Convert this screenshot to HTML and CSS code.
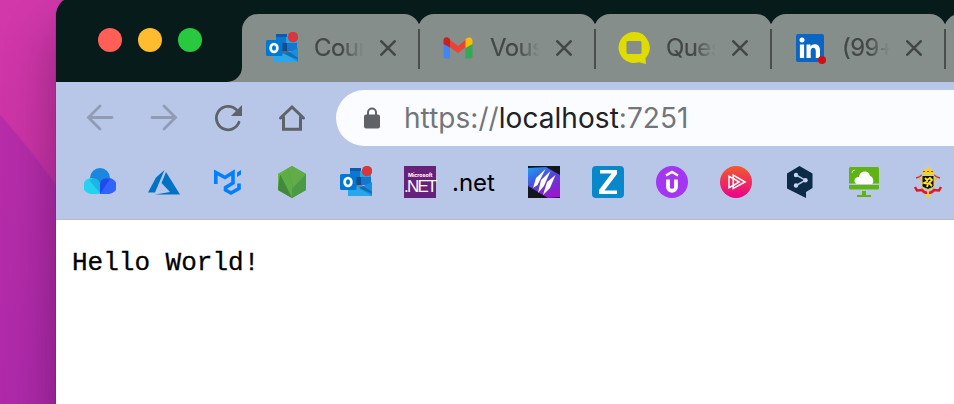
FILE: index.html
```html
<!DOCTYPE html>
<html lang="fr">
<head>
<meta charset="utf-8">
<title>localhost</title>
<link rel="stylesheet" href="styles.css">
</head>
<body>
<svg class="defs" width="0" height="0" aria-hidden="true">
  <symbol id="outlook" viewBox="0 0 32 32">
    <path fill="#0a5aad" d="M10 2h11v6H10z"/><path fill="#1275cd" d="M10 5h11v13H10z"/><path fill="#28a4e6" d="M20 5h11v13H20z"/><path fill="#124e8c" d="M15 11h6v8h-6z"/><path fill="#1377cf" d="M21 11h10v8H21z"/>
    <path fill="#28a8ea" d="M8 18v12h24V17l-11 6z"/><path fill="#1490df" d="M32 16v14L19 22z"/><path fill="#144f8a" d="M16 15l16 11v1.500L16 21z" opacity=".55"/>
    <rect y="8" width="16.500" height="16" rx="1.500" fill="#0078d4"/><ellipse cx="8" cy="16" rx="3.400" ry="4" fill="none" stroke="#fff" stroke-width="2.700"/>
    <circle cx="27" cy="5" r="5.200" fill="#d6373c"/>
  </symbol>
  <symbol id="close" viewBox="0 0 16 16"><path d="M1.300 1.300l13.400 13.400M14.700 1.300L1.300 14.700" fill="none" stroke="#444746" stroke-width="2.600" stroke-linecap="round"/></symbol>
</svg>
<div class="window">
  <header class="tabstrip">
    <div class="lights"><i class="red"></i><i class="yellow"></i><i class="green"></i></div>
    <div class="tabs">
      <div class="tab"><svg class="icon"><use href="#outlook"/></svg><span class="title">Cour</span><svg class="close"><use href="#close"/></svg></div>
      <div class="tab"><svg class="icon" viewBox="0 0 32 32"><path fill="#4285f4" d="M1.500 10L8 14v12.500H3.500q-2 0-2-2z"/><path fill="#34a853" d="M23.500 14l7-4v14.500q0 2-2 2h-5z"/><path fill="#ea4335" d="M7.500 7.500L16 14l8-6.500V15l-8 6-8.500-6z"/><path fill="#c5221f" d="M1.500 12V8.500C1.500 5 5 4 8 7v8.500z"/><path fill="#fbbc04" d="M23.500 7.500c3-3 7-2.500 7 2V12l-7 4z"/></svg><span class="title">Vous</span><svg class="close"><use href="#close"/></svg></div>
      <div class="tab"><svg class="icon" viewBox="0 0 32 32"><path fill="#dedc00" fill-rule="evenodd" d="M16 0a15.500 15.500 0 1 0 5 30.200l7 1.800-.5-6A15.500 15.500 0 0 0 16 0zM10 9h12q1.500 0 1.500 1.500v10q0 1.500-1.500 1.500H10q-1.500 0-1.500-1.500v-10Q8.500 9 10 9z"/></svg><span class="title">Ques</span><svg class="close"><use href="#close"/></svg></div>
      <div class="tab"><svg class="icon" viewBox="0 0 32 32"><rect x="2" y="2" width="28" height="28" rx="2" fill="#0a66c2"/><circle cx="8" cy="8" r="2.500" fill="#fff"/><path fill="#fff" d="M5.900 12.500h4.200V26H5.900zM12.500 12.500h4v2c2-3.500 9.500-3.500 9.500 3.500v8h-4.200v-7c0-4.500-5.100-4.500-5.100 0v7h-4.200z"/><circle cx="28" cy="28" r="4" fill="#cc1016"/></svg><span class="title">(99+)</span><svg class="close"><use href="#close"/></svg></div>
      <div class="tab"></div>
    </div>
  </header>
  <nav class="toolbar">
    <svg class="nav dim" viewBox="0 0 32 32"><path d="M28 15.500H4.500M16 4L4.500 15.500 16 27"/></svg>
    <svg class="nav dim" viewBox="0 0 32 32"><path d="M4 15.500H27.500M16 4l11.500 11.500L16 27"/></svg>
    <svg class="nav" viewBox="0 0 32 32"><path d="M27 20.300A11.700 11.700 0 1 1 24.500 7.900"/><path class="solid" d="M30 3v11H19z"/></svg>
    <svg class="nav" viewBox="0 0 32 32"><path class="roof" d="M4.500 16L16 5l11.500 11M7.500 15v12.200h17V15"/></svg>
    <div class="omnibox">
      <svg class="lock" viewBox="0 0 16 22"><path d="M4 9V5.500a4 4 0 0 1 8 0V9" fill="none" stroke="#5f6368" stroke-width="2"/><rect y="7.500" width="16" height="14" rx="2" fill="#5f6368"/></svg>
      <span class="url">https://<b>localhost</b>:7251</span>
    </div>
  </nav>
  <nav class="bookmarks">
    <svg viewBox="0 0 32 32"><circle cx="16" cy="12" r="10" fill="#1b86e0"/><path fill="#26d2ee" d="M16 28H8a8 8 0 1 1 2-15.500l6 5z"/><path fill="#3363ff" d="M16 28h8a8 8 0 1 0-2-15.500l-6 5z"/><path fill="#1cb6e6" d="M10 12.500q6 0 6 7V27L5 14z"/><path fill="#2149f0" d="M22 12.500q-6 0-6 7V28l10-15z"/></svg>
    <svg viewBox="0 0 32 32"><path fill="#0072c6" d="M16.500 4L8 11.500 0 26.500h7zM18 6l-4.500 11 8.500 9-15 2.500h25z"/></svg>
    <svg viewBox="0 0 32 32"><path d="M3.800 18V6.500l9.200 5 8-5V17l-7.500 4.500V24l5.500 3 8-4.500v-5" fill="none" stroke="#007fff" stroke-width="3.600"/><path fill="#007fff" d="M25 6.500L29 4v4.500L25 11z"/></svg>
    <svg viewBox="0 0 32 32"><path fill="#4c953f" d="M16 0l14 8v16l-14 8L2 24V8z"/><path fill="#66b848" d="M16 0L2 8v14L12 2.500z"/><path fill="#5cad46" d="M12 2.500L3 10l13 22 3-2z"/><path fill="#43893d" d="M4 8L2 22v2l14 8z"/><path fill="#62ac48" d="M16 0l-4 2.500L17 22 30 9V8z"/><path fill="#4e9944" d="M30 8L16 23v9l14-8z"/></svg>
    <svg><use href="#outlook"/></svg>
    <div class="dotnet"><div class="badge"><small>Microsoft</small><span>.NET</span></div><span class="label">.net</span></div>
    <svg viewBox="0 0 32 32"><defs><linearGradient id="a" x1="0" y1="0" x2=".6" y2="1"><stop stop-color="#17a5f5"/><stop offset=".5" stop-color="#4e48dc"/><stop offset="1" stop-color="#9817cf"/></linearGradient></defs><path fill="#15151d" d="M0 0h32v32H0z"/><path fill="url(#a)" d="M0 2l18-1 14 8v22l-12 1L0 20z"/><path fill="#fff" d="M17.500 3L8 12 5 22l4.500-3zM22.500 5L13 14l-3 13 6-7zM27.500 9L19 16l-4 13 7-7z"/></svg>
    <svg viewBox="0 0 32 32"><rect width="32" height="32" rx="4" fill="#0788ca"/><path fill="#fff" d="M8 4h17v4L12.500 24.500H25V28H7v-4L19.500 7.500H8z"/></svg>
    <svg viewBox="0 0 32 32"><circle cx="16" cy="16" r="16" fill="#a435f0"/><path d="M10 9.500L16 6l6 3.500" fill="none" stroke="#fff" stroke-width="2.600"/><path d="M12 13.500V21c0 5 8 5 8 0v-7.500" fill="none" stroke="#fff" stroke-width="3.800"/></svg>
    <svg viewBox="0 0 32 32"><defs><linearGradient id="b" x2="0" y2="1"><stop stop-color="#f15b2a"/><stop offset="1" stop-color="#ec008c"/></linearGradient></defs><circle cx="16" cy="16" r="16" fill="url(#b)"/><path d="M13.200 9v13.500L25 16zM13.200 12.500l6 3.500-6 3.500M13 12.500l-4-2.200v11.400l4-2.200" fill="none" stroke="#fff" stroke-width="1.500"/></svg>
    <svg viewBox="0 0 32 32"><path fill="#0b2b46" d="M15.500 0L28.500 7.500V22L22 26v6L3 22.500v-15z"/><path d="M12 9l9.500 5.200-9.500 5.300" fill="none" stroke="#b8c6e8" stroke-width="1.500"/><g fill="#c8d4ef"><circle cx="12" cy="9" r="2.200"/><circle cx="21.500" cy="14.300" r="2.200"/><circle cx="12" cy="19.500" r="2.200"/></g></svg>
    <svg viewBox="0 0 32 32"><rect x="1" y="1" width="30" height="22.500" rx="1.500" fill="#5fb414"/><path fill="#b8c6e8" d="M1 17.500h30V19H1z"/><path fill="#5fb414" d="M14 25h4v4h5v2H9v-2h5z"/><path fill="#fff" d="M9 18c-4-2-3-7 2-7C12 4 21 4 22 10c4 1 4 7 2 8z"/><path d="M4 7q0-3 3-3" fill="none" stroke="#c9e2bb"/></svg>
    <svg viewBox="0 0 32 32"><path fill="#f4d719" d="M15.300 0h1.400v3l5 1-1 4h-9.400l-1-4 5-1z"/><path d="M11 5.500h10" stroke="#d73023" stroke-dasharray="2 2"/><path d="M5 11l22 15M27 11L5 26" stroke="#d8c23a" stroke-width="1.200"/><path d="M4 12q4-1 6-3M28 12q-4-1-6-3" fill="none" stroke="#df2630" stroke-width="1.400"/><path fill="#111" stroke="#f4d719" d="M10 9.500h12v10c0 2-3 2.500-6 4-3-1.500-6-2-6-4z"/><path d="M13 12l2 2 3-2 2 2-3 3 3 3M16 15l-4 2 4 1-1 3" fill="none" stroke="#ffe52f" stroke-width="1.800"/><path d="M3 21l2 3.500 5-.5q2 3 6 3t6-3l5 .5 2-3.500" fill="none" stroke="#df1830" stroke-width="2.500"/><path d="M16 25v7M14 29.500h4" stroke="#f4d719" stroke-width="1.800"/></svg>
  </nav>
  <main><pre>Hello World!</pre></main>
</div>
</body>
</html>
```
FILE: styles.css
```css
* { box-sizing: border-box; }
body {
  margin: 0;
  width: 954px;
  height: 404px;
  overflow: hidden;
  padding-left: 56px;
  font-family: Inter, sans-serif;
  background: radial-gradient(circle at -675px 710px, rgba(176, 42, 170, .75) 899px, transparent 901px), linear-gradient(#d238aa, #cc34a6 35%, #ac28a8);
}
.defs { position: absolute; }
svg { display: block; flex: none; }
.window {
  width: 920px;
  height: 424px;
  margin-top: -4px;
  border-radius: 20px 0 0 0;
  overflow: hidden;
  background: #fff;
  box-shadow: 0 32px 50px rgba(20, 0, 40, .36), 0 0 1px rgba(0, 0, 0, .7);
}
.tabstrip { display: flex; height: 86px; padding-top: 18px; background: linear-gradient(#081b1b 60px, #868e8c 60px); }
.lights {
  display: flex;
  flex: none;
  gap: 16px;
  width: 186px;
  height: 86px;
  margin-top: -18px;
  padding: 32px 0 0 42px;
  background: #081b1b;
  border-bottom-right-radius: 15px;
}
.lights i { width: 24px; height: 24px; border-radius: 50%; }
.red { background: #ff5f57; }
.yellow { background: #febc2e; }
.green { background: #28c840; }
.tabs { display: flex; flex: none; background: linear-gradient(transparent 10px, #868e8c 10px) 20px 0 no-repeat; }
.tab {
  display: flex;
  align-items: center;
  flex: none;
  width: 178px;
  height: 68px;
  margin-right: -2px;
  padding-left: 24px;
  background: #868e8c;
  border-radius: 16px 16px 0 0;
}
.tab:nth-child(4) { width: 176px; }
.tab:nth-child(4) .title { width: 48px; }
.tab::after { content: ""; position: relative; z-index: 1; width: 2px; height: 40px; margin: 2px 0 0 auto; background: #4b4e4e; }
.icon { width: 32px; height: 32px; margin-bottom: 1px; }
.title {
  width: 50px;
  margin-left: 16px;
  overflow: hidden;
  white-space: nowrap;
  font-size: 24px;
  line-height: 32px;
  letter-spacing: -.6px;
  color: #444746;
  -webkit-text-stroke: .2px #444746;
  -webkit-mask-image: linear-gradient(90deg, #000 55%, transparent);
  mask-image: linear-gradient(90deg, #000 55%, transparent);
}
.close { width: 16px; height: 16px; margin-left: 16px; }
.toolbar { display: flex; align-items: center; gap: 32px; height: 72px; padding-left: 28px; background: #b8c6e8; }
.nav { width: 32px; height: 32px; fill: none; stroke: #5f6368; stroke-width: 2.8; stroke-linecap: round; }
.nav .solid { fill: #5f6368; stroke: none; }
.nav .roof { stroke-width: 3; }
.nav.dim { stroke: #919bb3; }
.omnibox { display: flex; align-items: center; flex: 1; height: 56px; margin-left: -4px; padding-left: 28px; border-radius: 28px 0 0 28px; background: #fbfcff; }
.lock { width: 16px; height: 22px; }
.url { margin-left: 24px; font-size: 28px; letter-spacing: .05px; color: #72757a; white-space: nowrap; }
.url b { font-weight: 400; color: #202124; }
.bookmarks { display: flex; gap: 32px; height: 66px; padding: 12px 0 0 28px; background: #b8c6e8; border-bottom: 1px solid #b4bfcc; }
.bookmarks > svg { width: 32px; height: 32px; }
.dotnet { display: flex; flex: none; width: 92px; height: 32px; align-items: center; }
.badge { width: 32px; height: 32px; padding-top: 6px; background: #68217a; color: #fff; }
.badge small { display: block; margin-left: 4px; font-size: 5.4px; line-height: 7px; font-weight: 700; letter-spacing: -.1px; }
.badge span { display: block; font: 17px/15px "Liberation Sans", sans-serif; letter-spacing: -1.8px; }
.label { margin-left: 16px; font-size: 24px; letter-spacing: 0; color: #000; }
pre { margin: 0; padding: 28px 16px; font: 26px/30px "Courier New", "Liberation Mono", monospace; color: #000; -webkit-text-stroke: .3px #000; }
```
